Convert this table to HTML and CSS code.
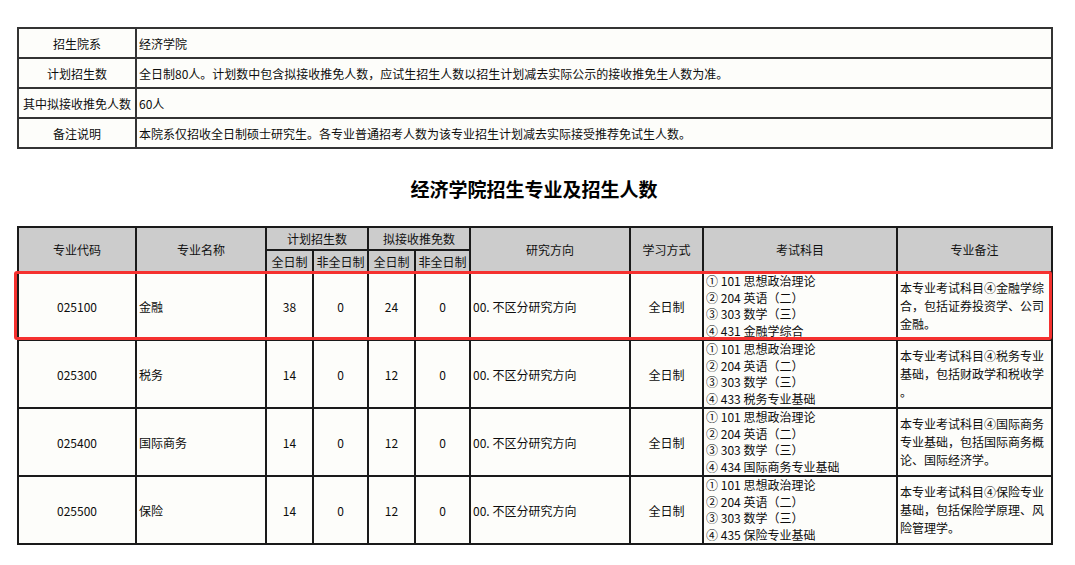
FILE: index.html
```html
<!DOCTYPE html>
<html lang="zh-CN">
<head>
<meta charset="utf-8">
<title>经济学院招生专业及招生人数</title>
<link rel="stylesheet" href="styles.css">
</head>
<body>
<div class="page">
  <table class="info">
    <colgroup><col class="c-label"><col class="c-value"></colgroup>
    <tbody>
      <tr><th>招生院系</th><td>经济学院</td></tr>
      <tr><th>计划招生数</th><td>全日制80人。计划数中包含拟接收推免人数，应试生招生人数以招生计划减去实际公示的接收推免生人数为准。</td></tr>
      <tr><th>其中拟接收推免人数</th><td>60人</td></tr>
      <tr><th>备注说明</th><td>本院系仅招收全日制硕士研究生。各专业普通招考人数为该专业招生计划减去实际接受推荐免试生人数。</td></tr>
    </tbody>
  </table>

  <h1 class="title">经济学院招生专业及招生人数</h1>

  <div class="majors-wrap">
    <table class="majors">
      <colgroup>
        <col class="w-code"><col class="w-name"><col class="w-n1"><col class="w-n2"><col class="w-n1"><col class="w-n2">
        <col class="w-dir"><col class="w-mode"><col class="w-exam"><col class="w-note">
      </colgroup>
      <thead>
        <tr class="h1">
          <th rowspan="2">专业代码</th>
          <th rowspan="2">专业名称</th>
          <th colspan="2">计划招生数</th>
          <th colspan="2">拟接收推免数</th>
          <th rowspan="2">研究方向</th>
          <th rowspan="2">学习方式</th>
          <th rowspan="2">考试科目</th>
          <th rowspan="2">专业备注</th>
        </tr>
        <tr class="h2">
          <th>全日制</th><th>非全日制</th><th>全日制</th><th>非全日制</th>
        </tr>
      </thead>
      <tbody>
        <tr>
          <td class="ctr">025100</td><td class="left">金融</td>
          <td class="ctr">38</td><td class="ctr">0</td><td class="ctr">24</td><td class="ctr">0</td>
          <td class="left">00. 不区分研究方向</td><td class="ctr">全日制</td>
          <td class="exam"><div class="exam-lines">① 101 思想政治理论<br>② 204 英语（二）<br>③ 303 数学（三）<br>④ 431 金融学综合</div></td>
          <td class="note">本专业考试科目④金融学综合，包括证券投资学、公司金融。</td>
        </tr>
        <tr>
          <td class="ctr">025300</td><td class="left">税务</td>
          <td class="ctr">14</td><td class="ctr">0</td><td class="ctr">12</td><td class="ctr">0</td>
          <td class="left">00. 不区分研究方向</td><td class="ctr">全日制</td>
          <td class="exam"><div class="exam-lines">① 101 思想政治理论<br>② 204 英语（二）<br>③ 303 数学（三）<br>④ 433 税务专业基础</div></td>
          <td class="note">本专业考试科目④税务专业基础，包括财政学和税收学<br>。</td>
        </tr>
        <tr>
          <td class="ctr">025400</td><td class="left">国际商务</td>
          <td class="ctr">14</td><td class="ctr">0</td><td class="ctr">12</td><td class="ctr">0</td>
          <td class="left">00. 不区分研究方向</td><td class="ctr">全日制</td>
          <td class="exam"><div class="exam-lines">① 101 思想政治理论<br>② 204 英语（二）<br>③ 303 数学（三）<br>④ 434 国际商务专业基础</div></td>
          <td class="note">本专业考试科目④国际商务专业基础，包括国际商务概论、国际经济学。</td>
        </tr>
        <tr>
          <td class="ctr">025500</td><td class="left">保险</td>
          <td class="ctr">14</td><td class="ctr">0</td><td class="ctr">12</td><td class="ctr">0</td>
          <td class="left">00. 不区分研究方向</td><td class="ctr">全日制</td>
          <td class="exam"><div class="exam-lines">① 101 思想政治理论<br>② 204 英语（二）<br>③ 303 数学（三）<br>④ 435 保险专业基础</div></td>
          <td class="note">本专业考试科目④保险专业基础，包括保险学原理、风险管理学。</td>
        </tr>
      </tbody>
    </table>
    <div class="highlight"></div>
  </div>
</div>
</body>
</html>
```

FILE: styles.css
```css
html, body {
  margin: 0;
  padding: 0;
  background: #ffffff;
}

body {
  font-family: "Noto Sans CJK SC", "Microsoft YaHei", sans-serif;
  font-size: 12px;
  color: #0d0d0d;
}

.page {
  width: 1034px;
  padding: 27px 0 0 17px;
}

table {
  border-collapse: collapse;
  table-layout: fixed;
  width: 1034px;
}

th, td {
  padding: 0 2px;
  font-weight: normal;
  line-height: 17px;
  background: #fdfdfa;
  white-space: nowrap;
  overflow: hidden;
}

/* top info table */
.info .c-label { width: 118px; }
.info .c-value { width: 916px; }

.info tr { height: 30px; }

.info th, .info td {
  border: 2px solid #333;
}

.info th {
  text-align: center;
}

.info td {
  text-align: left;
}

/* title */
.title {
  margin: 28px 0 25px;
  font-size: 19px;
  line-height: 24px;
  font-weight: bold;
  text-align: center;
  color: #000;
}

/* majors table */
.majors-wrap {
  position: relative;
}

.majors .w-code { width: 118px; }
.majors .w-name { width: 130px; }
.majors .w-n1 { width: 47px; }
.majors .w-n2 { width: 55px; }
.majors .w-dir { width: 160px; }
.majors .w-mode { width: 73px; }
.majors .w-exam { width: 194px; }
.majors .w-note { width: 155px; }

.majors th, .majors td {
  border: 2px solid #1a1a1a;
}

.majors thead th {
  background: #cccccc;
  text-align: center;
  color: #111;
}

.majors .h1 { height: 23px; }
.majors .h2 { height: 22px; }

.majors tbody tr { height: 68px; }

.majors td.ctr { text-align: center; }
.majors td.left { text-align: left; }

.majors td.exam {
  vertical-align: top;
  text-align: left;
}

.exam-lines {
  height: 66px;
  overflow: hidden;
  line-height: 16.5px;
}

.majors td.note {
  white-space: normal;
  line-break: anywhere;
  line-height: 18px;
  text-align: left;
}

.highlight {
  position: absolute;
  left: -3px;
  top: 45px;
  width: 1032px;
  height: 63px;
  border: 3px solid #f5312f;
  border-radius: 3px;
  pointer-events: none;
}
```
